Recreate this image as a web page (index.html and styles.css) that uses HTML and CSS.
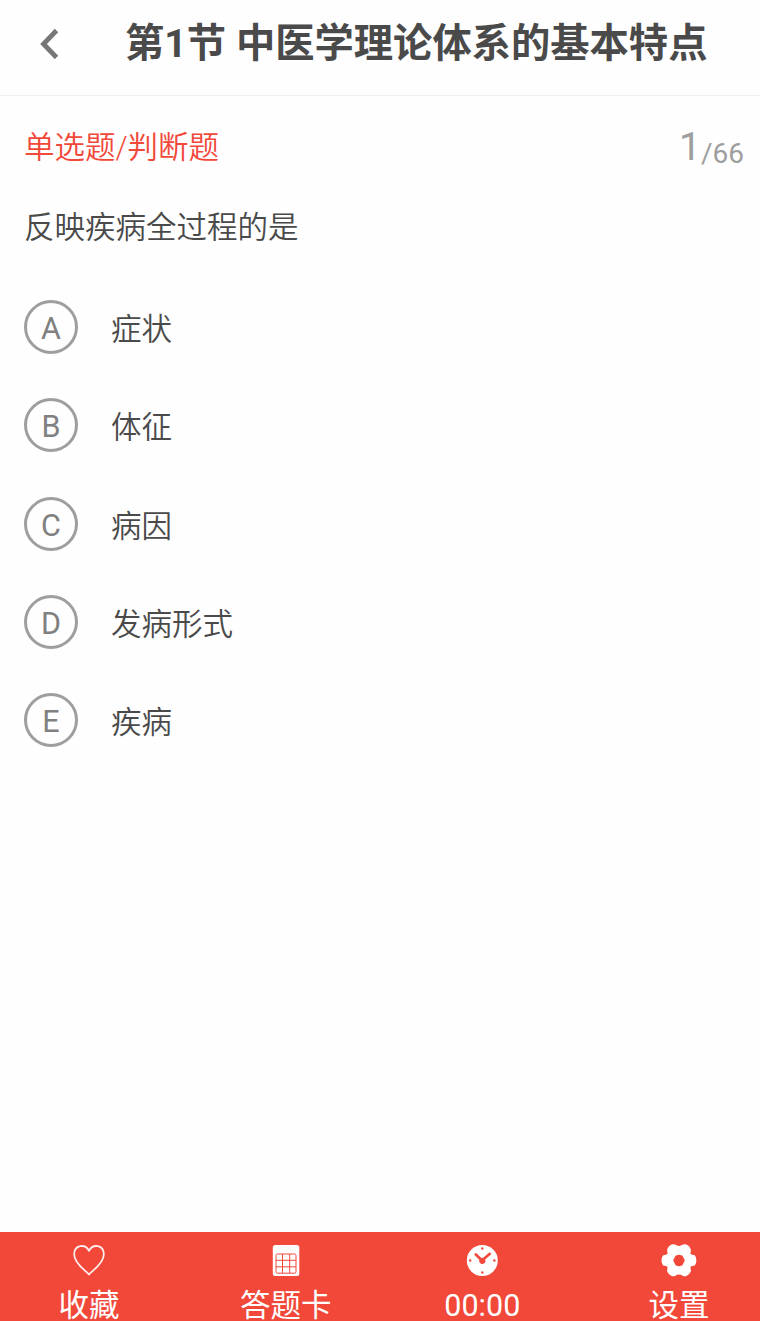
FILE: index.html
```html
<!DOCTYPE html>
<html lang="zh-CN">
<head>
    <meta charset="UTF-8">
    <meta name="viewport" content="width=device-width, initial-scale=1.0">
    <title>第1节 中医学理论体系的基本特点</title>
    <link rel="stylesheet" href="styles.css">
</head>
<body>
    <header class="header">
        <svg class="back" width="20" height="32" viewBox="0 0 20 32">
            <path d="M17.5 3.5 L4.5 17 L17.5 30.5" fill="none" stroke="#777" stroke-width="4.8"/>
        </svg>
        <h1 class="title">第1节 中医学理论体系的基本特点</h1>
    </header>

    <main class="content">
        <div class="info">
            <span class="type">单选题/判断题</span>
            <span class="count"><span class="current">1</span><span class="total">/66</span></span>
        </div>
        <p class="question">反映疾病全过程的是</p>
        <ul class="options">
            <li class="option"><span class="letter">A</span><span class="answer">症状</span></li>
            <li class="option"><span class="letter">B</span><span class="answer">体征</span></li>
            <li class="option"><span class="letter">C</span><span class="answer">病因</span></li>
            <li class="option"><span class="letter">D</span><span class="answer">发病形式</span></li>
            <li class="option"><span class="letter">E</span><span class="answer">疾病</span></li>
        </ul>
    </main>

    <footer class="footer">
        <div class="tab">
            <svg width="36" height="36" viewBox="0 0 36 36">
                <path d="M18 32.5 C15.5 29 3.2 22 3.2 12.5 C3.2 3 14 1.2 18 8.8 C22 1.2 32.8 3 32.8 12.5 C32.8 22 20.5 29 18 32.5 Z" fill="none" stroke="#fff" stroke-opacity=".9" stroke-width="1.8" stroke-linejoin="round"/>
            </svg>
            <span>收藏</span>
        </div>
        <div class="tab">
            <svg width="36" height="36" viewBox="0 0 36 36">
                <rect x="4.8" y="3" width="26.5" height="31" rx="2.5" fill="#fff"/>
                <path d="M9.5 12 H26.5 Q28 12 28 13.5 V29.5 Q28 31.2 26.5 31.2 H9.5 Q8 31.2 8 29.5 V13.5 Q8 12 9.5 12 Z M8 18.3 H28 M8 24.8 H28 M14.5 12 V31 M21.7 12 V31" fill="none" stroke="#f1483a" stroke-width="1"/>
            </svg>
            <span>答题卡</span>
        </div>
        <div class="tab">
            <svg width="36" height="36" viewBox="0 0 36 36">
                <circle cx="18.3" cy="18.5" r="15.5" fill="#fff"/>
                <path d="M11.8 12.5 L18 18.5 L25.8 11.8" fill="none" stroke="#f1483a" stroke-width="2.6" stroke-linecap="round"/>
                <circle cx="18.3" cy="18.8" r="3.1" fill="#f1483a"/>
                <g fill="#f1483a">
                    <circle cx="18.3" cy="6.5" r="1.2"/>
                    <circle cx="18.3" cy="30.5" r="1.2"/>
                    <circle cx="6.2" cy="18.5" r="1.2"/>
                    <circle cx="30.4" cy="18.5" r="1.2"/>
                </g>
            </svg>
            <span class="time">00:00</span>
        </div>
        <div class="tab">
            <svg width="36" height="36" viewBox="0 0 36 36">
                <path d="M10.5 2.6 Q12 2 14 2.6 Q18 5.4 22 2.6 Q24 2 25.5 2.6 Q28.5 4 29.8 7.2 Q30 9.5 29.3 11.5 Q30.5 13 33.8 13.2 Q35.4 15 35.4 18.3 Q35.4 21.5 33.8 23.4 Q30.5 23.6 29.3 25.2 Q30 27.5 29.8 29.4 Q28.5 32.6 25.5 34 Q24 34.6 22 34 Q18 31.2 14 34 Q12 34.6 10.5 34 Q7.5 32.6 6.2 29.4 Q6 27.5 6.7 25.2 Q5.5 23.6 2.2 23.4 Q.4 21.5 .4 18.3 Q.4 15 2.2 13.2 Q5.5 13 6.7 11.5 Q6 9.5 6.2 7.2 Q7.5 4 10.5 2.6 Z" fill="#fff"/>
                <path d="M15.2 14.2 L18 13.5 L20.8 14.2 L23 18.5 L20.8 22.7 L18 23.5 L15.2 22.7 L13 18.5 Z" fill="#f1483a" stroke="#f1483a" stroke-width="1.6" stroke-linejoin="round"/>
            </svg>
            <span>设置</span>
        </div>
    </footer>
</body>
</html>
```
FILE: styles.css
```css
* {
    box-sizing: border-box;
}
body {
    margin: 0;
    height: 1321px;
    display: flex;
    flex-direction: column;
    background-color: #fefefe;
    color: #4a4a4a;
    font-family: Roboto, "Noto Sans CJK SC", sans-serif;
    font-size: 30.5px;
    overflow: hidden;
}
.header {
    display: flex;
    align-items: flex-start;
    height: 96px;
    padding-left: 39px;
    border-bottom: 1px solid #efefef;
}
.back {
    margin-top: 27px;
}
.title {
    margin: 0 0 0 66px;
    font-size: 39.3px;
    font-weight: bold;
    line-height: 88px;
    white-space: nowrap;
}
.content {
    flex: 1;
    padding: 28px 16px 0 24px;
}
.info {
    display: flex;
    justify-content: space-between;
    height: 46px;
    line-height: 46px;
}
.type {
    padding-top: 1px;
    color: #f1483a;
    font-weight: 350;
}
.count {
    display: flex;
    color: #9e9e9e;
}
.current {
    font-size: 39px;
}
.total {
    padding-top: 7px;
    font-size: 28px;
}
.question {
    margin: 35px 0 0;
    font-weight: 350;
    line-height: 46px;
}
.options {
    list-style: none;
    margin: 49px 0 0;
    padding: 0;
    display: grid;
    gap: 44.3px;
}
.option {
    display: flex;
    align-items: center;
    gap: 33px;
    height: 54px;
}
.letter {
    width: 54px;
    height: 54px;
    border: 3px solid #9e9e9e;
    border-radius: 50%;
    color: #808080;
    line-height: 52px;
    text-align: center;
}
.answer {
    padding-top: 6px;
    font-weight: 350;
    line-height: 56px;
}
.footer {
    display: flex;
    justify-content: space-between;
    height: 89px;
    padding: 10px 21px 0 29px;
    background-color: #f1483a;
    color: #fff;
}
.tab {
    width: 120px;
    display: flex;
    flex-direction: column;
    align-items: center;
    line-height: 55px;
}
.tab svg {
    flex: none;
}
```
